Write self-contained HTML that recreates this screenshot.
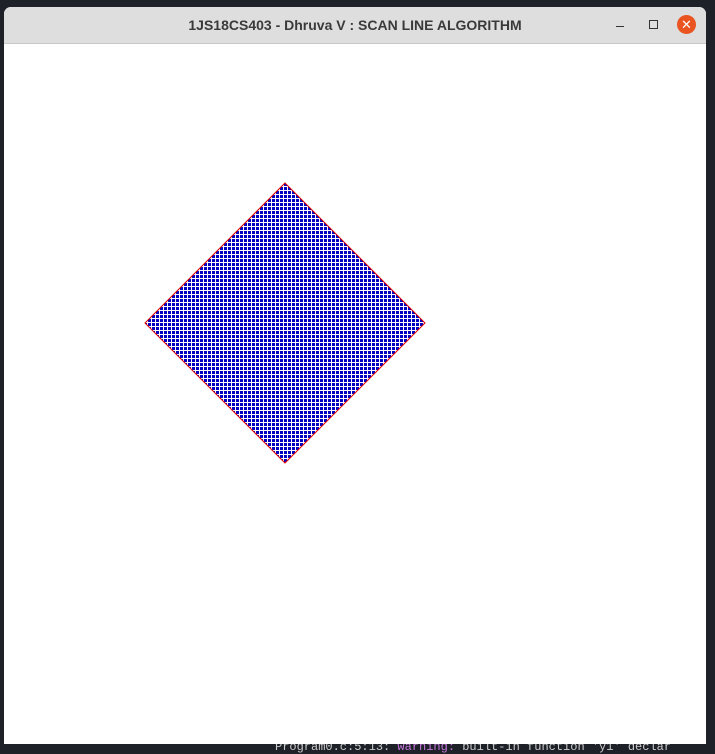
<!DOCTYPE html>
<html><head><meta charset="utf-8"><style>
html,body{margin:0;padding:0;width:715px;height:748px;overflow:hidden;background:#1e2128;font-family:"Liberation Sans",sans-serif}
.win{position:absolute;left:4px;top:7px;width:702px;height:737px;background:#fff;border-radius:7px 7px 0 0;overflow:hidden}
.tb{position:absolute;left:0;top:0;width:702px;height:36px;background:#dedede;border-bottom:1px solid #c8c8c8}
.title{position:absolute;left:0;right:0;top:10px;text-align:center;font-size:14px;font-weight:bold;color:#3a3a3a}
.min{position:absolute;left:612px;top:19px;width:8px;height:1px;background:#333}
.max{position:absolute;left:645px;top:13px;width:7px;height:7px;border:1px solid #333}
.cl{position:absolute;left:673px;top:8px;width:19px;height:19px;border-radius:50%;background:#e95420;color:#fff;font-size:13px;line-height:19px;text-align:center}
.bot{position:absolute;left:275px;top:740px;font:12px "Liberation Mono",monospace;color:#ccc;white-space:nowrap}
</style></head><body>
<div class="bot">Program0.c:5:13: <span style="color:#c678dd">warning:</span> built-in function 'y1' declar</div>
<div class="win">
<div class="tb"><div class="title">1JS18CS403 - Dhruva V : SCAN LINE ALGORITHM</div>
<div class="min"></div><div class="max"></div><div class="cl">✕</div></div>
<svg width="702" height="737" style="position:absolute;left:0;top:0" >
<defs>
<pattern id="g" width="4" height="4" patternUnits="userSpaceOnUse" x="0" y="0">
<rect width="4" height="4" fill="#fff"/><rect width="3" height="3" fill="#0000c0"/>
</pattern>
</defs>
<polygon points="281,176 421,316 281,456 141,316" fill="url(#g)" stroke="#e00000" stroke-width="1"/>
</svg>
</div>
</body></html>
